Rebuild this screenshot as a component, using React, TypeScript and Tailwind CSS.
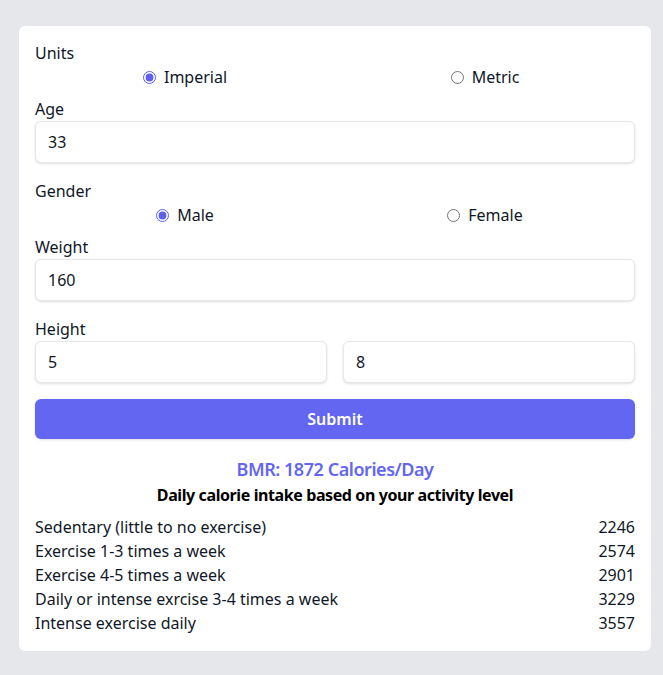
import { useState } from 'react';

const activityLevels = [
  { label: 'Sedentary (little to no exercise)', calories: 2246 },
  { label: 'Exercise 1-3 times a week', calories: 2574 },
  { label: 'Exercise 4-5 times a week', calories: 2901 },
  { label: 'Daily or intense exrcise 3-4 times a week', calories: 3229 },
  { label: 'Intense exercise daily', calories: 3557 },
];

interface IRadioOption {
  name: string;
  options: string[];
  value: string;
  onChange: (value: string) => void;
}

const RadioRow = ({ name, options, value, onChange }: IRadioOption) => (
  <div className="grid grid-cols-2">
    {options.map((option) => (
      <label key={option} className="flex items-center justify-center gap-2">
        <input
          type="radio"
          name={name}
          checked={value === option}
          onChange={() => onChange(option)}
          className="h-[13px] w-[13px] accent-[#5d5fef]"
        />
        <span>{option}</span>
      </label>
    ))}
  </div>
);

const inputClass =
  'block w-full rounded-md border border-gray-200 bg-white px-3 py-2 text-base text-gray-900 shadow-sm outline-none';

const App = () => {
  const [units, setUnits] = useState('Imperial');
  const [gender, setGender] = useState('Male');
  const [age, setAge] = useState('33');
  const [weight, setWeight] = useState('160');
  const [feet, setFeet] = useState('5');
  const [inches, setInches] = useState('8');

  return (
    <div className="min-h-screen bg-gray-200 pl-[19px] pr-[12px] pt-[26px] pb-[23px] font-['Noto_Sans',sans-serif] text-base text-gray-900">
      <div className="rounded-md bg-white px-4 pt-[15px] pb-4">
        <form className="flex flex-col" onSubmit={(e) => e.preventDefault()}>
          <div>
            <p>Units</p>
            <RadioRow name="units" options={['Imperial', 'Metric']} value={units} onChange={setUnits} />
          </div>

          <div className="mt-2">
            <p>Age</p>
            <input className={inputClass} value={age} onChange={(e) => setAge(e.target.value)} />
          </div>

          <div className="mt-4">
            <p>Gender</p>
            <RadioRow name="gender" options={['Male', 'Female']} value={gender} onChange={setGender} />
          </div>

          <div className="mt-2">
            <p>Weight</p>
            <input className={inputClass} value={weight} onChange={(e) => setWeight(e.target.value)} />
          </div>

          <div className="mt-4">
            <p>Height</p>
            <div className="grid grid-cols-2 gap-4">
              <input className={inputClass} value={feet} onChange={(e) => setFeet(e.target.value)} />
              <input className={inputClass} value={inches} onChange={(e) => setInches(e.target.value)} />
            </div>
          </div>

          <button
            type="submit"
            className="mt-4 rounded-md bg-[#6366f1] py-2 font-semibold text-white shadow-sm"
          >
            Submit
          </button>
        </form>

        <div className="mt-4 text-center">
          <h2 className="text-lg font-semibold tracking-tight text-[#6366f1]">BMR: 1872 Calories/Day</h2>
          <p className="font-bold tracking-tight text-black">
            Daily calorie intake based on your activity level
          </p>
        </div>

        <ul className="mt-2">
          {activityLevels.map((level) => (
            <li key={level.label} className="flex justify-between">
              <span>{level.label}</span>
              <span>{level.calories}</span>
            </li>
          ))}
        </ul>
      </div>
    </div>
  );
};

export default App;
